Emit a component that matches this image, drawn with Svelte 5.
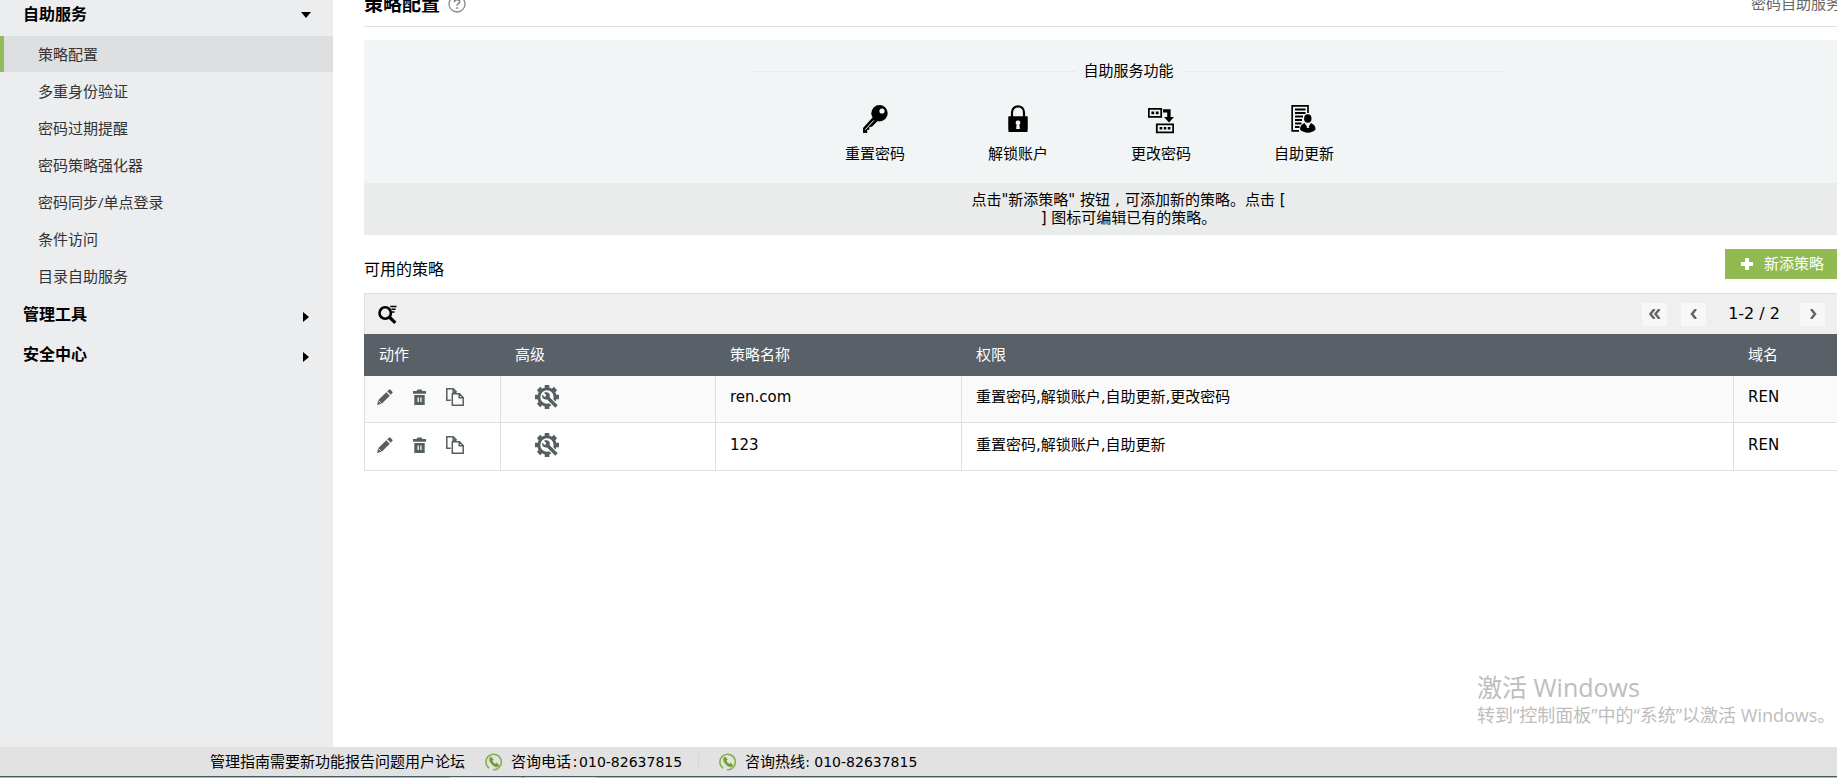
<script lang="ts">
	const serviceItems = [
		'策略配置',
		'多重身份验证',
		'密码过期提醒',
		'密码策略强化器',
		'密码同步/单点登录',
		'条件访问',
		'目录自助服务'
	];
	const collapsedSections = ['管理工具', '安全中心'];

	const policies = [
		{ name: 'ren.com', rights: ['重置密码', '解锁账户', '自助更新', '更改密码'], domain: 'REN' },
		{ name: '123', rights: ['重置密码', '解锁账户', '自助更新'], domain: 'REN' }
	];

	let active = $state('策略配置');
</script>

{#snippet phone()}
	<svg class="phone" viewBox="0 0 18 18" width="18" height="18" aria-hidden="true">
		<path d="M4 15.2A7.7 7.7 0 1 1 8 16.7" fill="none" stroke="#86ad45" stroke-width="1.5" />
		<path
			d="M5.6 4.2 4.5 5.6c-.3 3.6 3.6 8.2 7.4 8.3l1.8-1.2c.3-.3.2-.6 0-.8l-1.9-1.6c-.3-.2-.6-.1-.9.1l-.7.7c-1.5-.7-2.5-1.9-3-3.3l.7-.6c.3-.3.3-.6.1-.9L6.5 4.2c-.3-.3-.6-.3-.9 0z"
			fill="#6f9f2c"
			stroke="#6f9f2c"
			stroke-width=".6"
		/>
	</svg>
{/snippet}

<div class="page">
	<div class="body">
		<aside class="sidebar">
			<nav>
				<button class="section">
					自助服务
					<svg viewBox="0 0 10 10" width="10" height="10" aria-hidden="true"><path d="M0 2h10L5 8z" /></svg>
				</button>
				<ul>
					{#each serviceItems as item}
						<li>
							<a href="#{item}" class:active={active === item} onclick={() => (active = item)}>{item}</a>
						</li>
					{/each}
				</ul>
				{#each collapsedSections as section}
					<button class="section">
						{section}
						<svg class="closed" viewBox="0 0 10 10" width="10" height="10" aria-hidden="true"><path d="M2 0v10l6-5z" /></svg>
					</button>
				{/each}
			</nav>
		</aside>

		<main class="content">
			<header class="page-head">
				<h1>策略配置</h1>
				<svg viewBox="0 0 18 18" width="18" height="18" aria-hidden="true">
					<circle cx="9" cy="9" r="8" fill="none" stroke="#888" stroke-width="1.3" />
					<path d="M6.4 7.2C6.4 3.8 11.6 4 11.6 7c0 1.7-2.5 1.8-2.5 3.7" fill="none" stroke="#888" stroke-width="1.6" />
					<circle cx="9.1" cy="13" r="1" fill="#888" />
				</svg>
				<a href="#product" class="product">密码自助服务</a>
			</header>

			<section class="features">
				<h2><span>自助服务功能</span></h2>
				<ul>
					<li>
						<svg viewBox="0 0 26 30" width="26" height="30" aria-hidden="true">
							<path d="M11.5 11.5 1 23v5h4.2v-3l2-.3.3-2.6 2.4-.3 5.6-5.6z" />
							<circle cx="17.5" cy="8.3" r="8.2" />
							<circle cx="20" cy="6" r="2.6" fill="#f1f5f6" />
							<path d="m11.8 15.4-8.6 9.4" stroke="#f1f5f6" stroke-width="1" />
						</svg>
						重置密码
					</li>
					<li>
						<svg viewBox="0 0 26 30" width="26" height="30" aria-hidden="true">
							<path d="M7 12V7.5C7-.7 19-.7 19 7.500V12" fill="none" stroke="#000" stroke-width="2.2" />
							<path d="M3.5 11.500h19v13.500h-19z" />
							<path d="M3.500 11.500h19V27h-19z" />
							<path d="M13 15.500a2.200 2.200 0 0 0-1.400 4l-.5 4.500h3.800l-.5-4.500a2.200 2.200 0 0 0-1.400-4z" fill="#f1f5f6" />
						</svg>
						解锁账户
					</li>
					<li>
						<svg viewBox="0 0 26 30" width="26" height="30" aria-hidden="true">
							<path d="M.8 3.8h12.4v8H.8zM8.800 19.300h16.400v8H8.800z" fill="none" stroke="#000" stroke-width="1.8" />
							<path d="M3.4 6.400h2.800v2.800H3.400zM7.800 6.400h2.800v2.800H7.800zM11.600 22h2.600v2.600h-2.600zM15.700 22h2.600v2.600h-2.600zM19.800 22h2.600v2.600h-2.600z" />
							<path d="M15 4.200h7.600V12H26l-5 5.600-5-5.600h3.200V7.400H15z" />
						</svg>
						更改密码
					</li>
					<li>
						<svg viewBox="0 0 26 30" width="26" height="30" aria-hidden="true">
							<path d="M17 8V.8H1.200v25H8" fill="none" stroke="#000" stroke-width="1.7" />
							<path d="M4 4.500h10.500M4 8h10.500M4 11.500h8M4 15h7M4 18.500h6.500M4 22h4.500" stroke="#000" stroke-width="1.9" />
							<ellipse cx="16.800" cy="13.500" rx="3.700" ry="4.300" />
							<path d="M13.500 18c-3 1.400-4.500 3.200-4.500 6.500 4 4.200 12 4.200 15.500 0 0-3.300-1.500-5.100-4.500-6.500l-3.200 5z" />
							<path d="m16.800 18.500-1.100 4.500h2.300z" fill="#f1f5f6" />
						</svg>
						自助更新
					</li>
				</ul>
			</section>

			<p class="hint">
				点击"新添策略" 按钮<span class="punct">,</span>可添加新的策略。点击 [<br />
				] 图标可编辑已有的策略。
			</p>

			<div class="list-head">
				<h3>可用的策略</h3>
				<button class="add">
					<svg viewBox="0 0 12 12" width="12" height="12" aria-hidden="true"><path d="M4 0h4v4h4v4H8v4H4V8H0V4h4z" fill="#fff" /></svg>
					新添策略
				</button>
			</div>

			<div class="toolbar">
				<button class="search" aria-label="搜索">
					<svg viewBox="0 0 19 19" width="19" height="19" aria-hidden="true">
						<circle cx="7.2" cy="8" r="5.7" fill="none" stroke="#000" stroke-width="2.6" />
						<path d="m11.3 12 6 5.8" stroke="#000" stroke-width="3.2" />
						<path d="M12.2 1.5h6.300M13.500 4.300h4.200M13.800 7h2.700" stroke="#000" stroke-width="1.4" />
					</svg>
				</button>
				<div class="pager">
					<button aria-label="首页"><svg viewBox="0 0 12 10" width="12" height="10"><path d="M5.5 0l-4 5 4 5M10.500 0l-4 5 4 5" /></svg></button>
					<button aria-label="上一页"><svg viewBox="0 0 12 10" width="12" height="10"><path d="M8 0 4 5l4 5" /></svg></button>
					<span>1-2 / 2</span>
					<button aria-label="下一页"><svg viewBox="0 0 12 10" width="12" height="10"><path d="m4 0 4 5-4 5" /></svg></button>
					<button aria-label="末页"><svg viewBox="0 0 12 10" width="12" height="10"><path d="m1.500 0 4 5-4 5M6.500 0l4 5-4 5" /></svg></button>
				</div>
			</div>

			<table>
				<thead>
					<tr>
						<th class="col-actions">动作</th>
						<th class="col-advanced">高级</th>
						<th class="col-name">策略名称</th>
						<th>权限</th>
						<th class="col-domain">域名</th>
					</tr>
				</thead>
				<tbody>
					{#each policies as policy}
						<tr>
							<td>
								<div class="actions">
									<button aria-label="编辑">
										<svg viewBox="0 0 16 16" width="16" height="16">
											<path d="m0 16 1.400-5L9.300 3.200l3.500 3.500L5 14.600zM10.200 2.300 11.800.8c.5-.5 1.200-.5 1.700 0l1.700 1.700c.5.5.5 1.200 0 1.700l-1.500 1.600z" />
											<path d="m1.500 11.500 3 3" stroke="#fafafa" stroke-width=".8" />
										</svg>
									</button>
									<button aria-label="删除">
										<svg viewBox="0 0 13 16" width="13" height="16">
											<path d="M0 2h3.500l1-1.500h4l1 1.500H13v2.800H0zM1.300 6h10.400v10H1.300z" />
											<path d="M4.500 8.500h1.300V13H4.500zM7.300 8.500h1.300V13H7.300z" fill="#fff" />
										</svg>
									</button>
									<button aria-label="复制">
										<svg viewBox="0 0 18 18" width="18" height="18">
											<path d="M4.800 12.200H.8V.8h6.400l3 3v.7M7.200.8v3.500h3M6.300 5.800h7.200l3.700 3.700v7.700H6.300zM13.200 5.800v4h4" fill="none" stroke="#555e60" stroke-width="1.5" />
										</svg>
									</button>
								</div>
							</td>
							<td>
								<button class="gear" aria-label="高级">
									<svg viewBox="0 0 24 24" width="24" height="24">
										<circle cx="12" cy="12" r="8.2" fill="none" stroke="#555e60" stroke-width="3" />
										<path d="M12 0v4M12 20v4M0 12h4M20 12h4M3.500 3.500l3 3M20.500 3.500l-3 3M3.500 20.500l3-3" stroke="#555e60" stroke-width="4.600" />
										<path d="m14 14 7 7" stroke="#fff" stroke-width="5.600" />
										<path d="m12 12 9.500 9.500" stroke="#555e60" stroke-width="3.400" />
										<path d="M9 7.800 11.200 10l-.4 1.400-1.400.4-2.200-2.200c-.7 3.300 1.800 5.600 4.600 4.800l3-2.800c.8-3-2.300-5.300-5.800-3.800z" />
									</svg>
								</button>
							</td>
							<td>{policy.name}</td>
							<td>{policy.rights.join(',')}</td>
							<td>{policy.domain}</td>
						</tr>
					{/each}
				</tbody>
			</table>
		</main>

		<div class="watermark">
			<div class="big">激活 Windows</div>
			<div class="small">转到“控制面板”中的“系统”以激活 Windows。</div>
		</div>
	</div>

	<footer>
		<div class="links"><a href="#guide">管理指南</a><a href="#feature">需要新功能</a><a href="#report">报告问题</a><a href="#forum">用户论坛</a></div>
		<div class="contact">{@render phone()}<span>咨询电话<span class="colon">:</span><span class="tel">010-82637815</span></span></div>
		<div class="contact hotline">{@render phone()}<span>咨询热线<span class="tel">: 010-82637815</span></span></div>
	</footer>
	<div class="taskbar"><span></span><span></span></div>
</div>

<style>
	:global(body) {
		margin: 0;
		background: #fff;
	}

	.page {
		display: flex;
		flex-direction: column;
		min-height: 100vh;
		overflow: hidden;
		font-family: 'DejaVu Sans', 'Noto Sans CJK SC', sans-serif;
		font-size: 15px;
		line-height: 18px;
		color: #000;
	}

	ul {
		list-style: none;
		margin: 0;
		padding: 0;
	}

	h1,
	h2,
	h3 {
		margin: 0;
		font-weight: 400;
	}

	a {
		color: inherit;
		text-decoration: none;
	}

	button {
		border: 0;
		padding: 0;
		background: none;
		font: inherit;
		color: inherit;
		cursor: pointer;
	}

	svg {
		display: block;
		flex: none;
	}

	.body {
		position: relative;
		display: flex;
		flex: 1;
	}

	.sidebar {
		flex: none;
		width: 333px;
		background: #ebedef;
		font-family: 'Open Sans', 'Noto Sans CJK SC', sans-serif;
	}

	.sidebar nav {
		margin-top: -6px;
	}

	.sidebar ul {
		margin-top: 2px;
	}

	.section {
		display: flex;
		align-items: center;
		justify-content: space-between;
		width: 100%;
		height: 40px;
		padding: 0 22px 0 23px;
		font-size: 16px;
		font-weight: 700;
	}

	.section svg {
		margin-top: 2px;
	}

	.section .closed {
		margin-top: 6px;
	}

	.sidebar li a {
		display: block;
		border-left: 4px solid transparent;
		padding-left: 34px;
		line-height: 36px;
		color: #333;
	}

	.sidebar li + li {
		margin-top: 1px;
	}

	.sidebar li a.active {
		border-left-color: #91bb5c;
		background: #dedfe0;
	}

	.content {
		flex: 1;
		min-width: 0;
		margin-left: 31px;
		margin-right: -56px;
	}

	.page-head {
		display: flex;
		align-items: center;
		gap: 8px;
		height: 8px;
		padding-bottom: 18px;
		border-bottom: 1px solid #dfdfdf;
	}

	.page-head h1 {
		font-size: 19px;
		font-weight: 700;
		line-height: 24px;
	}

	.product {
		margin-left: auto;
		margin-right: 52px;
		color: #666;
	}

	.features {
		box-sizing: border-box;
		height: 143px;
		margin-top: 13px;
		padding-top: 22px;
		background: #f1f5f6;
	}

	.features h2 {
		display: flex;
		align-items: center;
		gap: 8px;
		width: 752px;
		margin: 0 auto;
		font-size: 15px;
	}

	.features h2::before,
	.features h2::after {
		content: '';
		flex: 1;
		height: 1px;
		background: #e7ebec;
	}

	.features ul {
		display: flex;
		justify-content: center;
		margin-top: 25px;
		padding-right: 78px;
	}

	.features li {
		display: flex;
		flex-direction: column;
		align-items: center;
		gap: 10px;
		width: 143px;
	}

	.hint {
		margin: 0;
		padding: 8px 0;
		background: #eaeceb;
		text-align: center;
	}

	.punct {
		display: inline-block;
		width: 15px;
		text-align: center;
	}

	.list-head {
		display: flex;
		align-items: center;
		justify-content: space-between;
		padding: 14px 52px 14px 0;
	}

	.list-head h3 {
		padding-top: 12px;
		font-size: 16px;
	}

	.add {
		display: flex;
		align-items: center;
		gap: 11px;
		height: 30px;
		padding: 0 17px 0 16px;
		background: #91bb51;
		color: #fff;
	}

	.toolbar {
		display: flex;
		align-items: center;
		justify-content: space-between;
		height: 40px;
		padding: 0 28px 0 13px;
		border: 1px solid #dfdfdf;
		border-bottom: 0;
		background: #efefef;
	}

	.pager {
		display: flex;
		align-items: center;
		gap: 14px;
	}

	.pager button {
		display: flex;
		align-items: center;
		justify-content: center;
		width: 25px;
		height: 23px;
		background: #f7f7f7;
	}

	.pager path {
		fill: none;
		stroke: #666;
		stroke-width: 2.5;
	}

	.pager span {
		margin: 0 6px 0 8px;
		font-size: 16px;
	}

	table {
		width: 100%;
		table-layout: fixed;
		border-spacing: 0;
	}

	th {
		height: 42px;
		padding: 0 0 0 15px;
		background: #596068;
		color: #fff;
		font-weight: 400;
		text-align: left;
	}

	td {
		box-sizing: border-box;
		height: 47px;
		padding: 0 0 4px 14px;
		border-left: 1px solid #dfdfdf;
		border-bottom: 1px solid #dfdfdf;
	}

	tbody tr:first-child {
		background: #fafafa;
	}

	tbody tr:last-child td {
		height: 48px;
		padding-bottom: 3px;
	}

	.col-actions {
		width: 121px;
	}

	.col-advanced {
		width: 200px;
	}

	.col-name {
		width: 231px;
	}

	.col-domain {
		width: 145px;
	}

	.actions {
		display: flex;
		align-items: center;
		gap: 20px;
		margin-left: -2px;
	}

	td svg {
		fill: #555e60;
	}

	.gear {
		display: block;
		margin-left: 20px;
	}

	.watermark {
		position: absolute;
		right: 0;
		bottom: 20px;
		width: 360px;
		font-family: 'Open Sans', 'Noto Sans CJK SC', sans-serif;
		color: #bdbdbd;
		white-space: nowrap;
	}

	.watermark .big {
		font-size: 25px;
		line-height: 32px;
	}

	.watermark .small {
		font-size: 18px;
		line-height: 24px;
	}

	footer {
		display: flex;
		align-items: center;
		height: 29px;
		padding-left: 210px;
		background: #e2e2e2;
	}

	.links {
		display: flex;
	}

	.contact {
		display: flex;
		align-items: center;
		gap: 8px;
		margin-left: 20px;
	}

	.colon {
		display: inline-block;
		width: 8px;
		text-align: center;
	}

	.tel {
		font-size: 14px;
	}

	.hotline {
		margin-left: 16px;
		padding-left: 20px;
		border-left: 1px solid #d4d8da;
	}

	.taskbar {
		display: flex;
		gap: 4px;
		height: 1px;
		padding-left: 450px;
		border-top: 1px solid #4a5b62;
		background: #8dc0d2;
	}

	.taskbar span {
		width: 71px;
		background: #cfe3ea;
	}
</style>
